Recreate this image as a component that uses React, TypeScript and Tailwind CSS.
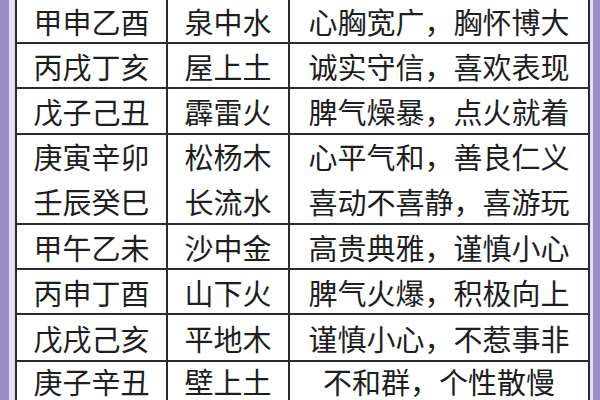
type Row = { h: string; ganzhi: string[]; nayin: string[]; trait: string[] };

const rows: Row[] = [
  { h: "h-[44px]", ganzhi: ["甲申乙酉"], nayin: ["泉中水"], trait: ["心胸宽广，胸怀博大"] },
  { h: "h-[45px]", ganzhi: ["丙戌丁亥"], nayin: ["屋上土"], trait: ["诚实守信，喜欢表现"] },
  { h: "h-[46px]", ganzhi: ["戊子己丑"], nayin: ["霹雷火"], trait: ["脾气燥暴，点火就着"] },
  {
    h: "h-[90px]",
    ganzhi: ["庚寅辛卯", "壬辰癸巳"],
    nayin: ["松杨木", "长流水"],
    trait: ["心平气和，善良仁义", "喜动不喜静，喜游玩"],
  },
  { h: "h-[45px]", ganzhi: ["甲午乙未"], nayin: ["沙中金"], trait: ["高贵典雅，谨慎小心"] },
  { h: "h-[45px]", ganzhi: ["丙申丁酉"], nayin: ["山下火"], trait: ["脾气火爆，积极向上"] },
  { h: "h-[47px]", ganzhi: ["戊戌己亥"], nayin: ["平地木"], trait: ["谨慎小心，不惹事非"] },
  { h: "h-[38px]", ganzhi: ["庚子辛丑"], nayin: ["壁上土"], trait: ["不和群，个性散慢"] },
];

function Cell({ lines, className }: { lines: string[]; className: string }) {
  return (
    <div className={`flex flex-col items-center justify-center ${className}`}>
      {lines.map((l) => (
        <span
          key={l}
          className={`whitespace-nowrap ${lines.length > 1 ? "leading-[45px]" : "leading-[34px]"}`}
        >
          {l}
        </span>
      ))}
    </div>
  );
}

export default function App() {
  return (
    <div className="flex h-[400px] w-[600px] overflow-hidden bg-[#9b8dc8]">
      <div className="w-[9px] shrink-0 bg-[#9a8cc9]" />
      <div className="w-[6px] shrink-0 bg-[#e4e0f2]" />
      <div
        className="flex w-[575px] shrink-0 flex-col self-start border-x-2 border-[#2b2b2b] bg-white text-[29px] text-[#1e1e1e]"
        style={{ fontFamily: '"Noto Sans CJK SC", "Noto Sans", sans-serif' }}
      >
        {rows.map((r, i) => (
          <div
            key={i}
            className={`flex ${i < rows.length - 1 ? "border-b-2" : ""} border-[#2b2b2b] ${r.h}`}
          >
            <Cell lines={r.ganzhi} className="w-[151px] border-r-2 border-[#2b2b2b]" />
            <Cell lines={r.nayin} className="w-[122px] border-r-2 border-[#2b2b2b]" />
            <Cell lines={r.trait} className="flex-1" />
          </div>
        ))}
      </div>
      <div className="w-[3px] shrink-0 bg-[#e4e0f2]" />
      <div className="flex-1 bg-[#9a8cc9]" />
    </div>
  );
}
